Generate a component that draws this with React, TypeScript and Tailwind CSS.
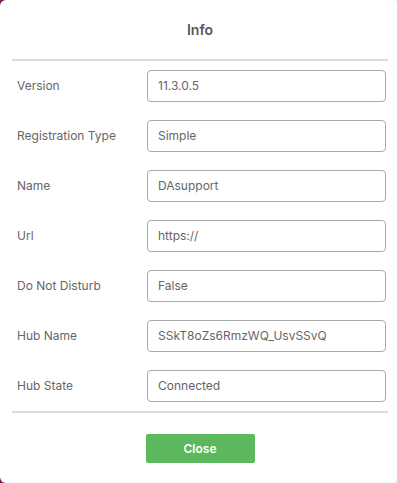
const rows: [string, string][] = [
  ["Version", "11.3.0.5"],
  ["Registration Type", "Simple"],
  ["Name", "DAsupport"],
  ["Url", "https://\u200a"],
  ["Do Not Disturb", "False"],
  ["Hub Name", "SSkT8oZs6RmzWQ_UsvSSvQ"],
  ["Hub State", "Connected"],
];

export default function App() {
  return (
    <div className="h-[483px] w-[397px] bg-[linear-gradient(90deg,#7a1f5c_0%,#8a2a3a_10%,#e8e8e8_60%,#f4f4f4_100%)] font-['Inter','Liberation_Sans',sans-serif]">
      <div className="flex h-full w-full flex-col rounded-[6px] bg-white pl-3 pr-[9px]">
        <h2 className="pt-[21px] text-center text-[14px] font-semibold leading-[18px] text-[#555]">
          Info
        </h2>
        <div className="mt-[20px] h-[2px] bg-[#dcdcdc]" />

        <div className="mt-[9px] flex flex-col gap-[18px] pl-[5px] pr-[2px]">
          {rows.map(([label, value]) => (
            <div key={label} className="flex items-center">
              <span className="w-[130px] shrink-0 text-[12px] text-[#666]">{label}</span>
              <div className="flex h-[32px] flex-1 items-center rounded-[4px] border border-[#aaa] px-[10px] text-[12px] text-[#666]">
                {value}
              </div>
            </div>
          ))}
        </div>

        <div className="mt-[9px] h-[2px] bg-[#dcdcdc]" />

        <div className="mt-[21px] flex justify-center">
          <button
            type="button"
            className="h-[29px] w-[109px] rounded-[2px] bg-[#5cb85c] text-[12px] font-semibold text-white"
          >
            Close
          </button>
        </div>
      </div>
    </div>
  );
}
